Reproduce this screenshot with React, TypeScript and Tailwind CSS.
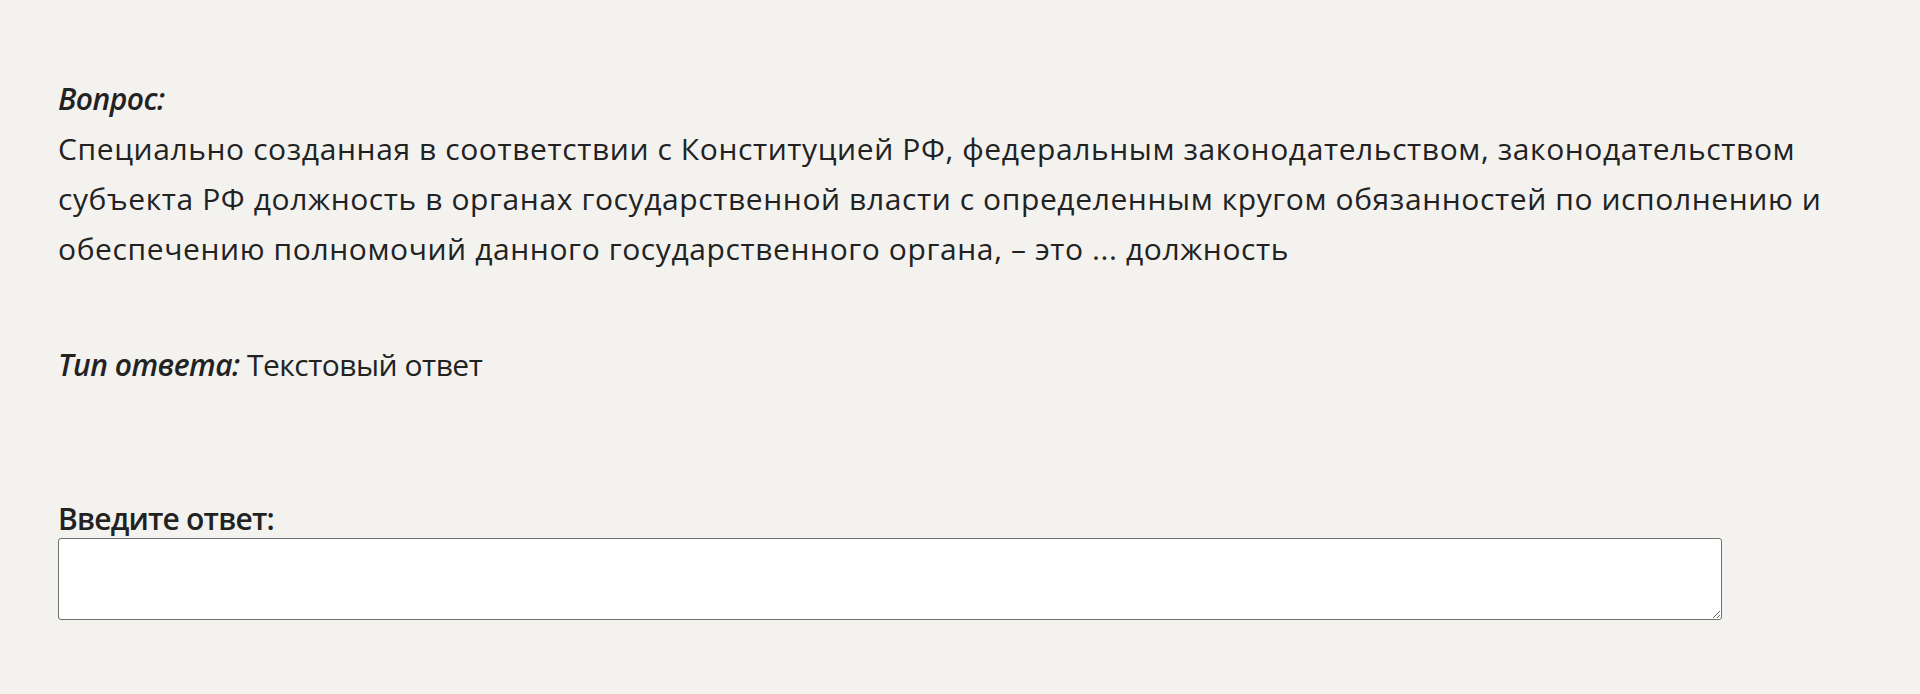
import React from "react";

export default function App() {
  return (
    <div
      className="min-h-[694px] w-full bg-[#f3f2ef] text-[#222222] pl-[58px] pr-[20px] pt-[74px]"
      style={{ fontFamily: '"Open Sans", "Noto Sans", sans-serif' }}
    >
      <div className="text-[30px] leading-[50px]">
        <div className="font-semibold italic tracking-[-0.5px]">Вопрос:</div>
        <div className="tracking-[0.6px]">
          Специально созданная в соответствии с Конституцией РФ, федеральным законодательством, законодательством
          субъекта РФ должность в органах государственной власти с определенным кругом обязанностей по исполнению и
          обеспечению полномочий данного государственного органа, – это ... должность
        </div>
        <div className="mt-[66px] tracking-[-0.5px]">
          <span className="font-semibold italic">Тип ответа:</span> Текстовый ответ
        </div>
        <div className="mt-[110px] font-semibold leading-[38px] tracking-[-0.8px]">Введите ответ:</div>
      </div>
      <textarea className="block w-[1664px] h-[82px] bg-white border-[1.5px] border-[#707070] rounded-[3px] resize-y outline-none" />
    </div>
  );
}
